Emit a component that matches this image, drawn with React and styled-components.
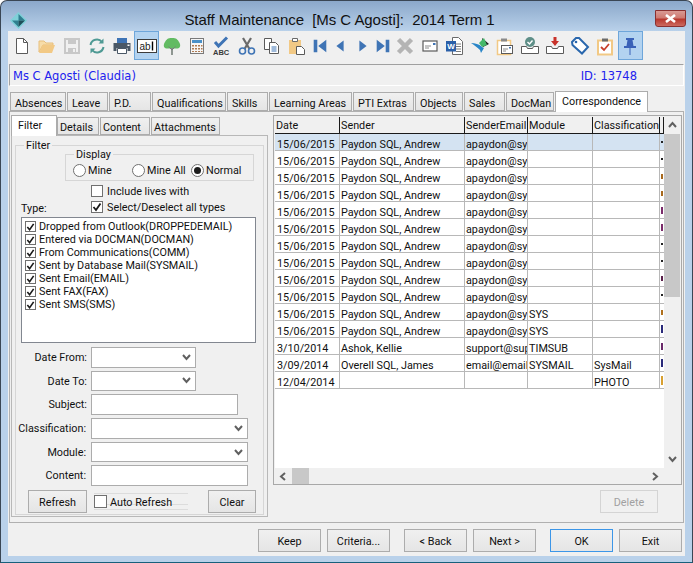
import React from "react";
import styled, { createGlobalStyle } from "styled-components";

const GlobalStyle = createGlobalStyle`
  html, body { margin: 0; padding: 0; background: #ffffff; }
  body { font-family: Roboto, "Liberation Sans", Arial, sans-serif; font-size: 10.8px; color: #101010; }
`;

const Window = styled.div`
  box-sizing: border-box;
  width: 693px;
  height: 563px;
  display: flex;
  flex-direction: column;
  border: 1px solid #3a4654;
  border-bottom-color: #17607c;
  border-radius: 7px 7px 0 0;
  background: linear-gradient(180deg, #8ba8ca 0, #b9d1ea 30px);
  overflow: hidden;
`;
const TitleBar = styled.div`
  height: 30px;
  flex: none;
  display: flex;
  align-items: flex-start;
  padding: 9px 3px 0 9px;
  box-sizing: border-box;
`;
const Logo = styled.svg`
  width: 17px;
  height: 17px;
  margin-top: 2px;
  flex: none;
`;
const TitleText = styled.div`
  flex: 1;
  text-align: center;
  font-family: "Liberation Sans", sans-serif;
  font-size: 15px;
  letter-spacing: -0.06px;
  line-height: 20px;
  white-space: pre;
  color: #111;
  padding-right: 3px;
`;
const CloseButton = styled.div`
  width: 31px;
  height: 17px;
  margin-right: 3px;
  box-sizing: border-box;
  border: 1px solid #8a3030;
  border-radius: 0 0 3px 3px;
  background: linear-gradient(180deg, #d99a94 0, #cf7a72 45%, #b8382e 55%, #cc6a60 100%);
  display: flex;
  align-items: center;
  justify-content: center;
`;
const Client = styled.div`
  flex: 1;
  margin: 0 7px 6px 7px;
  background: #f0f0f0;
  display: flex;
  flex-direction: column;
  min-height: 0;
`;
const Toolbar = styled.div`
  display: flex;
  height: 29px;
  padding-left: 1px;
  flex: none;
`;
const ToolButton = styled.div`
  box-sizing: border-box;
  width: ${(p) => p.$w || 25}px;
  margin-left: ${(p) => p.$gap || 0}px;
  height: 29px;
  display: flex;
  align-items: center;
  justify-content: center;
  border: 1px solid ${(p) => (p.$on ? "#6ea6da" : "transparent")};
  background: ${(p) => (p.$on ? "#b3d3f0" : "transparent")};
`;
const InfoBar = styled.div`
  box-sizing: border-box;
  height: 22px;
  margin: 4px 1px 0 1px;
  padding: 1px 46px 0 3px;
  display: flex;
  align-items: center;
  justify-content: space-between;
  border: 1px solid #fff;
  border-top-color: #a0a0a0;
  border-left-color: #a0a0a0;
  font-family: "DejaVu Sans", sans-serif;
  font-size: 11.5px;
  color: #2222ee;
`;
const MainTabs = styled.div`
  display: flex;
  align-items: flex-end;
  height: 25px;
  margin-left: 2px;
  flex: none;
`;
const Tab = styled.div`
  box-sizing: border-box;
  width: ${(p) => p.$w}px;
  height: ${(p) => (p.$active ? 21 : 19)}px;
  margin-right: ${(p) => (p.$active ? 0 : 1)}px;
  margin-bottom: ${(p) => (p.$active ? -1 : 0)}px;
  padding-left: ${(p) => (p.$active ? 6 : 4)}px;
  line-height: ${(p) => (p.$active ? 20 : 21)}px;
  white-space: nowrap;
  border: 1px solid #acacac;
  border-bottom: ${(p) => (p.$active ? "none" : "1px solid #acacac")};
  background: ${(p) => (p.$active ? "#ffffff" : "linear-gradient(180deg, #f0f0f0, #e5e5e5)")};
  position: relative;
  z-index: ${(p) => (p.$active ? 1 : 0)};
`;
const TabPane = styled.div`
  box-sizing: border-box;
  height: 412px;
  margin: 0 1px;
  width: 675px;
  flex: none;
  border: 1px solid #b0b0b0;
  padding: 3px 1px 0 1px;
  display: flex;
`;
const LeftColumn = styled.div`
  width: 257px;
  flex: none;
  display: flex;
  flex-direction: column;
`;
const SubTabs = styled.div`
  display: flex;
  align-items: flex-end;
  height: 20px;
  flex: none;
`;
const SubTab = styled(Tab)`
  height: ${(p) => (p.$active ? 21 : 18)}px;
  padding-left: ${(p) => (p.$active ? 6 : 2)}px;
  line-height: 20px;
`;
const SubPane = styled.div`
  box-sizing: border-box;
  height: 382px;
  border: 1px solid #b8b8b8;
  padding: 3px 3px 0 3px;
`;
const GroupBox = styled.fieldset`
  box-sizing: border-box;
  margin: 0;
  padding: 0;
  min-width: 0;
  border: 1px solid #d6d6d6;
  height: ${(p) => p.$h}px;
`;
const GroupTitle = styled.legend`
  margin-left: ${(p) => p.$indent}px;
  padding: 0 2px;
  line-height: 13px;
  font-size: 10.8px;
`;
const DisplayBox = styled(GroupBox)`
  width: 189px;
  margin: -4px 0 0 49px;
`;
const RadioRow = styled.div`
  display: flex;
  padding: 1px 0 0 7px;
`;
const RadioItem = styled.label`
  width: ${(p) => p.$w}px;
  flex: none;
  display: flex;
  align-items: center;
  gap: 2px;
  line-height: 14px;
`;
const RadioDot = styled.span`
  box-sizing: border-box;
  width: 13px;
  height: 13px;
  border-radius: 50%;
  border: 1px solid #707070;
  background: #fff;
  display: flex;
  align-items: center;
  justify-content: center;
  &::after {
    content: "";
    display: ${(p) => (p.$on ? "block" : "none")};
    width: 7px;
    height: 7px;
    border-radius: 50%;
    background: #1c1c1c;
  }
`;
const LowText = styled.span`
  padding-top: 2px;
`;
const TypeHeader = styled.div`
  display: flex;
  align-items: flex-end;
  margin-top: 4px;
  padding-left: 5px;
`;
const TypeLabel = styled.div`
  width: 70px;
  line-height: 13px;
  margin-bottom: -2px;
`;
const CheckColumn = styled.div`
  display: flex;
  flex-direction: column;
  gap: 4px;
`;
const CheckRow = styled.label`
  display: flex;
  align-items: center;
  gap: ${(p) => p.$gap || 4}px;
  height: ${(p) => p.$h || 12}px;
  white-space: nowrap;
`;
const CheckBox = styled.span`
  box-sizing: border-box;
  width: ${(p) => p.$size || 12}px;
  height: ${(p) => p.$size || 12}px;
  flex: none;
  border: 1px solid #707070;
  background: #fff;
  display: flex;
  align-items: center;
  justify-content: center;
`;
const TypeList = styled.div`
  box-sizing: border-box;
  width: 235px;
  height: 126px;
  margin: 4px 0 0 5px;
  border: 1px solid #828790;
  background: #fff;
  padding: 2px 0 0 3px;
`;
const FilterForm = styled.div`
  display: grid;
  grid-template-columns: 71px 1fr;
  grid-auto-rows: 20.6px;
  column-gap: 4px;
  row-gap: 3.1px;
  margin-top: 4px;
`;
const FieldLabel = styled.div`
  text-align: right;
  line-height: 22px;
  padding-right: ${(p) => p.$nudge || 0}px;
`;
const FieldBox = styled.div`
  box-sizing: border-box;
  width: ${(p) => p.$w}px;
  border: 1px solid #acacac;
  background: #fff;
  display: flex;
  align-items: center;
  justify-content: flex-end;
  padding-right: 4px;
`;
const FilterActions = styled.div`
  display: flex;
  align-items: center;
  margin: 4px 0 0 12px;
`;
const PushButton = styled.div`
  box-sizing: border-box;
  width: ${(p) => p.$w || 63}px;
  height: ${(p) => p.$h || 23}px;
  flex: none;
  margin-left: ${(p) => p.$gap || 0}px;
  padding-top: 2px;
  border: 1px solid ${(p) => (p.$default ? "#3c96e8" : p.$off ? "#d4d4d4" : "#acacac")};
  background: ${(p) => (p.$off ? "#f0f0f0" : "linear-gradient(180deg, #f0f0f0, #e5e5e5)")};
  color: ${(p) => (p.$off ? "#a0a0a0" : "#101010")};
  display: flex;
  align-items: center;
  justify-content: center;
`;
const AutoRefresh = styled.div`
  box-sizing: border-box;
  width: 94px;
  height: 17px;
  margin-left: 7px;
  display: flex;
  align-items: center;
  background:
    linear-gradient(#dcdcdc, #dcdcdc) 0 0 / 100% 1px no-repeat,
    linear-gradient(#dcdcdc, #dcdcdc) 0 11px / 100% 1px no-repeat,
    linear-gradient(#dcdcdc, #dcdcdc) 0 16px / 100% 1px no-repeat;
`;
const RightColumn = styled.div`
  width: 409px;
  margin-left: 5px;
  flex: none;
  display: flex;
  flex-direction: column;
`;
const GridPanel = styled.div`
  box-sizing: border-box;
  height: 370px;
  border: 1px solid #a8a8a8;
  display: grid;
  grid-template-columns: 389px 17px;
  grid-template-rows: 351px 16px;
  padding: 1px 0 0 1px;
`;
const GridArea = styled.div`
  background: #fff;
  overflow: hidden;
`;
const DataTable = styled.table`
  table-layout: fixed;
  width: 389px;
  border-collapse: separate;
  border-spacing: 0;
  font-size: 10.8px;
`;
const HeadCell = styled.th`
  height: 17px;
  padding: 2px 0 0 1px;
  box-sizing: border-box;
  line-height: 13px;
  vertical-align: top;
  text-align: left;
  font-weight: normal;
  white-space: nowrap;
  overflow: hidden;
  background: #f0f0f0;
  border-right: 1px solid #1a1a1a;
  border-bottom: 1px solid #1a1a1a;
`;
const Cell = styled.td`
  height: 17px;
  padding: 5px 0 0 1px;
  box-sizing: border-box;
  line-height: 11px;
  vertical-align: top;
  white-space: nowrap;
  overflow: hidden;
  background: ${(p) => (p.$selected ? "#d4e3f2" : "#fff")};
  border-right: 1px solid #b8b8b8;
  border-bottom: 1px solid #b8b8b8;
  &:first-child {
    padding-left: 2px;
  }
`;
const EdgeCell = styled.td`
  padding: 0 0 0 1px;
  box-sizing: border-box;
  vertical-align: middle;
  background: ${(p) => (p.$selected ? "#d4e3f2" : "#fff")};
  border-bottom: 1px solid #b8b8b8;
`;
const Tick = styled.span`
  display: block;
  width: 2px;
  height: ${(p) => p.$h}px;
  background: ${(p) => p.$c};
`;
const VScroll = styled.div`
  display: flex;
  flex-direction: column;
`;
const ScrollEnd = styled.div`
  height: 17px;
  flex: none;
  display: flex;
  align-items: center;
  justify-content: center;
`;
const VThumb = styled.div`
  width: 16px;
  height: 163px;
  background: #c8c8c8;
`;
const VTrack = styled.div`
  flex: 1;
`;
const HScroll = styled.div`
  display: flex;
  align-items: center;
  grid-column: 1 / 3;
`;
const ScrollSide = styled.div`
  width: 17px;
  height: 16px;
  flex: none;
  display: flex;
  align-items: center;
  justify-content: center;
`;
const HThumb = styled.div`
  width: 17px;
  height: 16px;
  background: #c8c8c8;
`;
const HTrack = styled.div`
  flex: 1;
`;
const DeleteRow = styled.div`
  display: flex;
  justify-content: flex-end;
  padding: 5px 24px 0 0;
`;
const Footer = styled.div`
  display: flex;
  justify-content: flex-end;
  padding: 6px 3px 0 0;
`;

const Chevron = ({ dir = "down" }) => {
  const pts = {
    down: "1,2 4.5,6 8,2",
    up: "1,6 4.5,2 8,6",
    left: "6,1 2,4.5 6,8",
    right: "2,1 6,4.5 2,8",
  }[dir];
  return (
    <svg width="9" height="9" viewBox="0 0 9 9">
      <polyline points={pts} fill="none" stroke="#606060" strokeWidth="2" />
    </svg>
  );
};

const Check = () => (
  <svg width="10" height="10" viewBox="0 0 10 10">
    <polyline points="1.5,5 4,8 8.5,1.5" fill="none" stroke="#1a1a1a" strokeWidth="1.8" />
  </svg>
);

const Icon = ({ children }) => (
  <svg width="20" height="20" viewBox="0 0 20 20">
    {children}
  </svg>
);

const BLUE = "#3f74b5";
const TAN = "#f2c985";
const DARK = "#5a5a5a";

const toolIcons = [
  <Icon key="new">
    <path d="M4.5 2.5h7l4 4v11h-11z" fill="#fff" stroke={DARK} />
    <path d="M11.5 2.5v4h4" fill="none" stroke={DARK} />
  </Icon>,
  <Icon key="open">
    <path d="M2 16V5h5l2 2h7v2H6z" fill="#f7dca8" stroke="#e8bf7c" />
    <path d="M2 17l3.5-8H18l-3 8z" fill={TAN} />
  </Icon>,
  <Icon key="save">
    <path d="M3 3h14v14H3z" fill="none" stroke="#c8c8c8" strokeWidth="2" />
    <path d="M6 3h8v5H6zM6 12h8v5H6z" fill="#c8c8c8" />
    <path d="M11 13h2v3h-2z" fill="#f0f0f0" />
  </Icon>,
  <Icon key="sync">
    <path d="M3.5 9a6.5 6.5 0 0 1 11.5-3" fill="none" stroke="#4f9a94" strokeWidth="2" />
    <path d="M16.5 11a6.5 6.5 0 0 1-11.5 3" fill="none" stroke="#4f9a94" strokeWidth="2" />
    <path d="M16.5 2.5v5h-5zM3.5 17.5v-5h5z" fill="#4f9a94" />
  </Icon>,
  <Icon key="print">
    <path d="M5 2h10v5H5z" fill={BLUE} />
    <path d="M1.500 7h17v8h-3v-3h-11v3h-3z" fill="#4a5866" />
    <path d="M5.500 12.500h9v5h-9z" fill="#fff" stroke="#4a5866" />
    <path d="M15.500 8.500h2v1.500h-2z" fill="#fff" />
  </Icon>,
  <Icon key="abl">
    <rect x="0.500" y="3.500" width="19" height="13" fill="#fff" stroke="#3c3c3c" />
    <text x="2.500" y="13.500" fontSize="10" fontFamily="Liberation Sans, sans-serif" fill="#222">ab</text>
    <path d="M15.500 5.500v9" stroke="#000" strokeWidth="1.400" />
  </Icon>,
  <Icon key="tree">
    <path d="M10 2c4.500 0 5.500 1.500 7 4 2 3 1.500 6-1.500 6.500h-11C1.500 12 1 9 3 6c1.500-2.500 2.500-4 7-4z" fill="#62bb62" />
    <path d="M9.200 12h1.600v7H9.200z" fill="#77807a" />
    <path d="M6.500 10.500L10 14l3.500-3.500" fill="none" stroke="#77807a" />
  </Icon>,
  <Icon key="calc">
    <rect x="3.500" y="2.500" width="13" height="15" fill="#f5f5f5" stroke="#7a7a7a" />
    <path d="M5 4h10v3H5z" fill="#4a90c8" />
    <path d="M5 9h2v1.500H5zM8 9h2v1.500H8zM11 9h2v1.500h-2zM14 9h1.500v1.500H14zM5 12h2v1.500H5zM8 12h2v1.500H8zM11 12h2v1.500h-2zM14 12h1.500v1.500H14zM5 15h2v1H5zM8 15h2v1H8zM11 15h2v1h-2zM14 15h1.500v1H14z" fill="#b07a50" />
  </Icon>,
  <Icon key="spell">
    <path d="M3 6l3.500 4L15 1.500" fill="none" stroke={BLUE} strokeWidth="3" />
    <text x="1" y="19" fontSize="7.500" fontWeight="bold" fontFamily="Liberation Sans, sans-serif" fill="#3a3a3a">ABC</text>
  </Icon>,
  <Icon key="cut">
    <path d="M6 2l6.500 11M14 2L7.500 13" stroke="#6a6a6a" strokeWidth="2.200" fill="none" />
    <circle cx="5.500" cy="15" r="3" fill="none" stroke={BLUE} strokeWidth="1.600" />
    <circle cx="14.500" cy="15" r="3" fill="none" stroke={BLUE} strokeWidth="1.600" />
  </Icon>,
  <Icon key="copy">
    <path d="M2.500 2.500h7v11h-7z" fill="#fff" stroke={DARK} />
    <path d="M7.500 6.500h6l3 3v8h-9z" fill="#fff" stroke={DARK} />
    <path d="M9.500 11h5M9.500 13h5M9.500 15h5" stroke={BLUE} />
  </Icon>,
  <Icon key="paste">
    <path d="M2 4h12v14H2z" fill={TAN} />
    <path d="M5.500 2.500h5v3h-5z" fill="#fff" stroke="#6a6a6a" />
    <path d="M9.500 10.500h5l3 3v5h-8z" fill="#fff" stroke={DARK} />
  </Icon>,
];

const navIcons = [
  <Icon key="first"><path d="M3 3h4v14H3zM17 3v14l-9-7z" fill={BLUE} /></Icon>,
  <Icon key="prev"><path d="M14 4v12l-8-6z" fill={BLUE} /></Icon>,
  <Icon key="next"><path d="M6 4v12l8-6z" fill={BLUE} /></Icon>,
  <Icon key="last"><path d="M3 3v14l9-7zM13 3h4v14h-4z" fill={BLUE} /></Icon>,
];

const moreIcons = [
  <Icon key="del">
    <path d="M3.500 3.500l13 13M16.500 3.500l-13 13" stroke="#b4b4b4" strokeWidth="4.500" />
  </Icon>,
  <Icon key="card">
    <rect x="3" y="5" width="14" height="10" fill="#fff" stroke="#5a5a5a" strokeWidth="1.200" />
    <path d="M5 10h6M5 12h4" stroke="#8a8a8a" />
    <path d="M13 7h2.500v2H13z" fill={BLUE} />
  </Icon>,
  <Icon key="word">
    <path d="M7.500 1.500h6l4 4v13h-10z" fill="#fff" stroke="#6a6a6a" />
    <path d="M11 8h5M11 10.500h5M11 13h5M11 15.500h5" stroke="#7a7a7a" />
    <path d="M1 5h10v10.500H1z" fill="#2a5fa8" />
    <text x="2.300" y="13.300" fontSize="8" fontWeight="bold" fontFamily="Liberation Sans, sans-serif" fill="#fff">W</text>
  </Icon>,
  <Icon key="send">
    <path d="M12 2l7 6-6 3z" fill="#1d1d1d" />
    <path d="M9 7l5-5 3 7-5 2z" fill="#45b86a" />
    <path d="M1 7c4 0 8 1 11 4l2 1-3 5-1-3C7 11 4 9 1 7z" fill="#2a86c8" />
  </Icon>,
  <Icon key="clipcard">
    <path d="M2.500 4.500h13v14h-13z" fill="#fff" stroke={TAN} strokeWidth="1.500" />
    <path d="M6 2.500h6v3H6z" fill="#8a8a8a" />
    <rect x="6.500" y="9.500" width="11" height="8" fill="#fff" stroke="#5a5a5a" />
    <path d="M8 13h5M8 15h3" stroke="#8a8a8a" />
    <path d="M14 11h2v1.500h-2z" fill={BLUE} />
  </Icon>,
  <Icon key="traycheck">
    <path d="M1.500 10.500h5l1 2h5l1-2h5v7h-17z" fill="#fff" stroke="#5a5a5a" />
    <circle cx="10" cy="6" r="5" fill="#5f8f88" />
    <path d="M7.500 6l2 2 3-3.500" fill="none" stroke="#fff" strokeWidth="1.400" />
  </Icon>,
  <Icon key="traydown">
    <path d="M1.500 10.500h5l1 2h5l1-2h5v7h-17z" fill="#fff" stroke="#5a5a5a" />
    <path d="M8.500 1h3v4H14l-4 5-4-5h2.500z" fill="#c8322a" />
  </Icon>,
  <Icon key="tag">
    <path d="M2 6l4-4 3 0 9 9-6 6.500L2.500 9z" fill="#fff" stroke="#2a67ad" strokeWidth="2" />
    <circle cx="6" cy="6" r="1.300" fill="#2a67ad" />
  </Icon>,
  <Icon key="clipcheck">
    <path d="M3 4.500h14v14H3z" fill="#fff" stroke={TAN} strokeWidth="2" />
    <path d="M7 2.500h6v3H7z" fill="#6a6a6a" />
    <path d="M6 11l3 3 5-6" fill="none" stroke="#c8402a" strokeWidth="1.800" />
  </Icon>,
];

const mainTabs = [
  ["Absences", 56],
  ["Leave", 41],
  ["P.D.", 42],
  ["Qualifications", 74],
  ["Skills", 41],
  ["Learning Areas", 83],
  ["PTI Extras", 61],
  ["Objects", 48],
  ["Sales", 41],
  ["DocMan", 48],
];

const subTabs = [
  ["Details", 42],
  ["Content", 50],
  ["Attachments", 69],
];

const types = [
  "Dropped from Outlook(DROPPEDEMAIL)",
  "Entered via DOCMAN(DOCMAN)",
  "From Communications(COMM)",
  "Sent by Database Mail(SYSMAIL)",
  "Sent Email(EMAIL)",
  "Sent FAX(FAX)",
  "Sent SMS(SMS)",
];

const fields = [
  { label: "Date From:", w: 105, drop: true },
  { label: "Date To:", w: 105, drop: true },
  { label: "Subject:", w: 147 },
  { label: "Classification:", w: 157, drop: true, nudge: 1 },
  { label: "Module:", w: 157, drop: true, nudge: 1 },
  { label: "Content:", w: 157, nudge: 1 },
];

const columns = [
  ["Date", 65],
  ["Sender", 125],
  ["SenderEmail", 63],
  ["Module", 65],
  ["Classification", 67],
];

const andrew = ["15/06/2015", "Paydon SQL, Andrew", "apaydon@sysmail.com.au"];
const rows = [
  { cells: [...andrew, "", ""], tick: ["#222", 2] },
  { cells: [...andrew, "", ""], tick: ["#222", 2] },
  { cells: [...andrew, "", ""], tick: ["#a8681c", 5] },
  { cells: [...andrew, "", ""], tick: ["#a8681c", 5] },
  { cells: [...andrew, "", ""], tick: ["#7a2a6a", 7] },
  { cells: [...andrew, "", ""], tick: ["#7a2a6a", 7] },
  { cells: [...andrew, "", ""], tick: ["#222", 2] },
  { cells: [...andrew, "", ""], tick: ["#222", 2] },
  { cells: [...andrew, "", ""], tick: ["#5a1f4a", 5] },
  { cells: [...andrew, "", ""], tick: ["#222", 2] },
  { cells: [...andrew, "SYS", ""], tick: ["#b0701c", 5] },
  { cells: [...andrew, "SYS", ""], tick: ["#2a2a7a", 8] },
  { cells: ["3/10/2014", "Ashok, Kellie", "support@suptimes.com", "TIMSUB", ""], tick: ["#6a2a6a", 7] },
  { cells: ["3/09/2014", "Overell SQL, James", "email@emailaddress.com", "SYSMAIL", "SysMail"], tick: ["#2a2a7a", 8] },
  { cells: ["12/04/2014", "", "", "", "PHOTO"], tick: ["#d8a030", 9] },
];

export default function App() {
  return (
    <>
      <GlobalStyle />
      <Window>
        <TitleBar>
          <Logo viewBox="0 0 17 17">
            <path d="M8.500 0L17 8.500 8.500 17 0 8.500z" fill="#7fd0d8" />
            <path d="M8.500 2L15 8.500H8.500z" fill="#2f7f8f" />
            <path d="M8.500 15L2 8.500h6.500z" fill="#2f7f8f" />
            <path d="M8.500 8.500H15L8.500 15z" fill="#1f4f5a" />
          </Logo>
          <TitleText>{"Staff Maintenance  [Ms C Agosti]:  2014 Term 1"}</TitleText>
          <CloseButton>
            <svg width="13" height="9" viewBox="0 0 13 9">
              <path d="M2 1l9 7M11 1L2 8" stroke="#fff" strokeWidth="2.600" />
            </svg>
          </CloseButton>
        </TitleBar>
        <Client>
          <Toolbar>
            {toolIcons.map((icon, i) => (
              <ToolButton key={i} $on={i === 5}>{icon}</ToolButton>
            ))}
            {navIcons.map((icon, i) => (
              <ToolButton key={i} $w={20} $gap={i === 0 ? 0.5 : i === 2 ? 3 : 0}>{icon}</ToolButton>
            ))}
            {moreIcons.map((icon, i) => (
              <ToolButton key={i}>{icon}</ToolButton>
            ))}
            <ToolButton $on>
              <Icon>
                <path d="M6 2h8v2h-1.500l1 6H16v2H4v-2h2.500l1-6H6z" fill="#3a62b8" />
                <path d="M9.500 12h1v7h-1z" fill="#3a62b8" />
              </Icon>
            </ToolButton>
          </Toolbar>
          <InfoBar>
            <span>Ms C Agosti (Claudia)</span>
            <span>ID: 13748</span>
          </InfoBar>
          <MainTabs>
            {mainTabs.map(([name, w]) => (
              <Tab key={name} $w={w}>{name}</Tab>
            ))}
            <Tab $active $w={93}>Correspondence</Tab>
          </MainTabs>
          <TabPane>
            <LeftColumn>
              <SubTabs>
                <SubTab $active $w={46}>Filter</SubTab>
                {subTabs.map(([name, w]) => (
                  <SubTab key={name} $w={w}>{name}</SubTab>
                ))}
              </SubTabs>
              <SubPane>
                <GroupBox $h={376}>
                  <GroupTitle $indent={8}>Filter</GroupTitle>
                  <DisplayBox $h={33}>
                    <GroupTitle $indent={8}>Display</GroupTitle>
                    <RadioRow>
                      <RadioItem $w={59}><RadioDot /><LowText>Mine</LowText></RadioItem>
                      <RadioItem $w={59}><RadioDot /><LowText>Mine All</LowText></RadioItem>
                      <RadioItem $w={60}><RadioDot $on /><LowText>Normal</LowText></RadioItem>
                    </RadioRow>
                  </DisplayBox>
                  <TypeHeader>
                    <TypeLabel>Type:</TypeLabel>
                    <CheckColumn>
                      <CheckRow><CheckBox />Include lives with</CheckRow>
                      <CheckRow><CheckBox><Check /></CheckBox>Select/Deselect all types</CheckRow>
                    </CheckColumn>
                  </TypeHeader>
                  <TypeList>
                    {types.map((t) => (
                      <CheckRow key={t} $h={13} $gap={3}>
                        <CheckBox $size={11}><Check /></CheckBox>
                        {t}
                      </CheckRow>
                    ))}
                  </TypeList>
                  <FilterForm>
                    {fields.map((f) => (
                      <React.Fragment key={f.label}>
                        <FieldLabel $nudge={f.nudge}>{f.label}</FieldLabel>
                        <FieldBox $w={f.w}>{f.drop && <Chevron />}</FieldBox>
                      </React.Fragment>
                    ))}
                  </FilterForm>
                  <FilterActions>
                    <PushButton $w={59}>Refresh</PushButton>
                    <AutoRefresh>
                      <CheckRow $gap={3}>
                        <CheckBox $size={13} />
                        <LowText>Auto Refresh</LowText>
                      </CheckRow>
                    </AutoRefresh>
                    <PushButton $w={48} $gap={20}>Clear</PushButton>
                  </FilterActions>
                </GroupBox>
              </SubPane>
            </LeftColumn>
            <RightColumn>
              <GridPanel>
                <GridArea>
                  <DataTable>
                    <colgroup>
                      {columns.map(([name, w]) => (
                        <col key={name} width={w} />
                      ))}
                      <col width={4} />
                    </colgroup>
                    <thead>
                      <tr>
                        {columns.map(([name]) => (
                          <HeadCell key={name}>{name}</HeadCell>
                        ))}
                        <HeadCell />
                      </tr>
                    </thead>
                    <tbody>
                      {rows.map((row, i) => (
                        <tr key={i}>
                          {row.cells.map((c, j) => (
                            <Cell key={j} $selected={i === 0}>{c}</Cell>
                          ))}
                          <EdgeCell $selected={i === 0}>
                            <Tick $c={row.tick[0]} $h={row.tick[1]} />
                          </EdgeCell>
                        </tr>
                      ))}
                    </tbody>
                  </DataTable>
                </GridArea>
                <VScroll>
                  <ScrollEnd><Chevron dir="up" /></ScrollEnd>
                  <VThumb />
                  <VTrack />
                  <ScrollEnd><Chevron /></ScrollEnd>
                </VScroll>
                <HScroll>
                  <ScrollSide><Chevron dir="left" /></ScrollSide>
                  <HThumb />
                  <HTrack />
                  <ScrollSide><Chevron dir="right" /></ScrollSide>
                  <ScrollSide />
                </HScroll>
              </GridPanel>
              <DeleteRow>
                <PushButton $off $w={58}>Delete</PushButton>
              </DeleteRow>
            </RightColumn>
          </TabPane>
          <Footer>
            <PushButton>Keep</PushButton>
            <PushButton $gap={6}>Criteria...</PushButton>
            <PushButton $gap={14}>&lt; Back</PushButton>
            <PushButton $gap={6}>Next &gt;</PushButton>
            <PushButton $gap={14} $default>OK</PushButton>
            <PushButton $gap={6}>Exit</PushButton>
          </Footer>
        </Client>
      </Window>
    </>
  );
}
